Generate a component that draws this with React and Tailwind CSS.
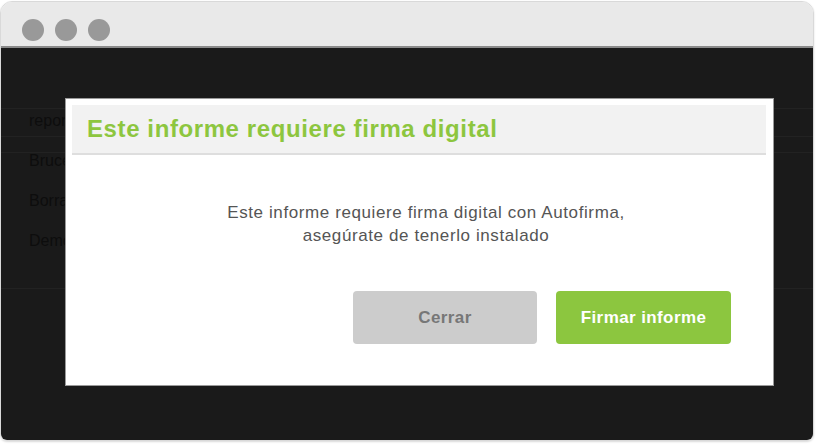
export default function App() {
  const rows = [
    { label: "reports", top: "top-[61px]" },
    { label: "Bruce Wayne", top: "top-[101px]" },
    { label: "Borrador", top: "top-[141px]" },
    { label: "Demo", top: "top-[181px]" },
  ];

  return (
    <div className="w-[822px] h-[444px] bg-white font-['Liberation_Sans',Arial,sans-serif] pt-[1px]">
      <div className="w-[814px] h-[440px] rounded-t-[12px] rounded-b-[7px] border border-[#d9d9d9] overflow-hidden flex flex-col shadow-[0_1px_2px_rgba(0,0,0,0.15)]">
        {/* browser bar */}
        <div className="h-[46px] bg-[#e9e9e9] border-b-2 border-[#8a8a8a] flex items-center gap-[11px] pl-[21px] pt-[12px] shrink-0">
          <span className="w-[22px] h-[22px] rounded-full bg-[#999999]" />
          <span className="w-[22px] h-[22px] rounded-full bg-[#999999]" />
          <span className="w-[22px] h-[22px] rounded-full bg-[#999999]" />
        </div>

        {/* page behind the overlay */}
        <div className="relative flex-1 bg-[#1a1a1a]">
          <div className="absolute left-0 right-0 top-[60px] h-px bg-[#222]" />
          <div className="absolute left-0 right-0 top-[88px] h-px bg-[#222]" />
          <div className="absolute left-0 right-0 top-[104px] h-px bg-[#222]" />
          <div className="absolute left-0 right-0 top-[240px] h-px bg-[#222]" />
          {rows.map((r) => (
            <div key={r.label} className={`absolute left-[28px] ${r.top} text-[16px] text-[#0d0d0d]`}>
              {r.label}
            </div>
          ))}

          {/* modal */}
          <div className="absolute left-[64px] top-[50px] w-[709px] h-[288px] bg-white border border-[#9a9a9a] pt-[6px] pl-[6px] pr-[7px]">
            <div className="h-[50px] bg-[#f2f2f2] border-b-2 border-[#dedede] flex items-center pl-[15px]">
              <h2 className="text-[24px] tracking-[0.6px] font-bold text-[#8dc63f] leading-none">
                Este informe requiere firma digital
              </h2>
            </div>
            <p className="mt-[46px] pl-[14px] text-center text-[17px] tracking-[0.6px] leading-[23px] text-[#555555]">
              Este informe requiere firma digital con Autofirma,
              <br />
              asegúrate de tenerlo instalado
            </p>
            <div className="mt-[44px] flex justify-end gap-[19px] pr-[35px]">
              <button className="w-[184px] h-[53px] rounded-[4px] bg-[#cccccc] text-[17px] tracking-[0.4px] font-bold text-[#777777]">
                Cerrar
              </button>
              <button className="w-[175px] h-[53px] rounded-[4px] bg-[#8cc63f] text-[17px] tracking-[0.4px] font-bold text-white">
                Firmar informe
              </button>
            </div>
          </div>
        </div>
      </div>
    </div>
  );
}
